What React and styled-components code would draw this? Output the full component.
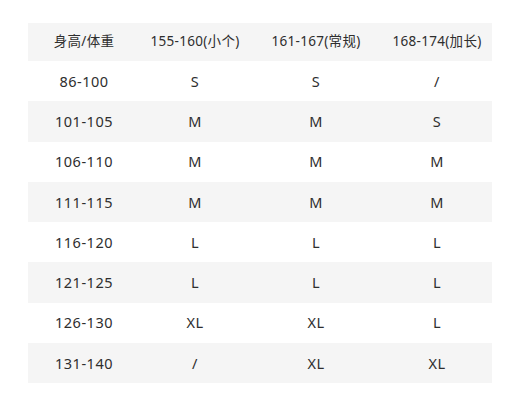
import React from "react";
import styled, { createGlobalStyle } from "styled-components";

const GlobalStyle = createGlobalStyle`
  html, body {
    margin: 0;
    padding: 0;
    background: #ffffff;
  }
  body {
    font-family: "Noto Sans", "Noto Sans CJK SC", sans-serif;
    color: #2e2e2e;
  }
`;

const header = ["身高/体重", "155-160(小个)", "161-167(常规)", "168-174(加长)"];

const rows = [
  ["86-100", "S", "S", "/"],
  ["101-105", "M", "M", "S"],
  ["106-110", "M", "M", "M"],
  ["111-115", "M", "M", "M"],
  ["116-120", "L", "L", "L"],
  ["121-125", "L", "L", "L"],
  ["126-130", "XL", "XL", "L"],
  ["131-140", "/", "XL", "XL"],
];

const App = () => {
  return (
    <>
      <GlobalStyle />
      <Page>
        <Table>
          <Row $striped $head>
            {header.map((h) => (
              <HeadCell key={h}>{h}</HeadCell>
            ))}
          </Row>
          {rows.map((r, i) => (
            <Row key={r[0]} $striped={i % 2 === 1}>
              {r.map((c, j) => (
                <Cell key={j}>{c}</Cell>
              ))}
            </Row>
          ))}
        </Table>
      </Page>
    </>
  );
};

export default App;

const Page = styled.div`
  width: 520px;
  height: 408px;
  box-sizing: border-box;
  padding: 23px 28px 0 28px;
`;

const Table = styled.div`
  display: flex;
  flex-direction: column;
  width: 464px;
`;

const Row = styled.div`
  display: grid;
  grid-template-columns: 112px 110px 132px 110px;
  align-items: center;
  height: ${(p) => (p.$head ? "38px" : "40.25px")};
  background: ${(p) => (p.$striped ? "#f5f5f5" : "#ffffff")};
`;

const Cell = styled.div`
  text-align: center;
  font-size: 14.5px;
  line-height: 1;
  letter-spacing: 0.5px;
`;

const HeadCell = styled(Cell)`
  font-size: 13.5px;
  letter-spacing: 0.3px;
`;
